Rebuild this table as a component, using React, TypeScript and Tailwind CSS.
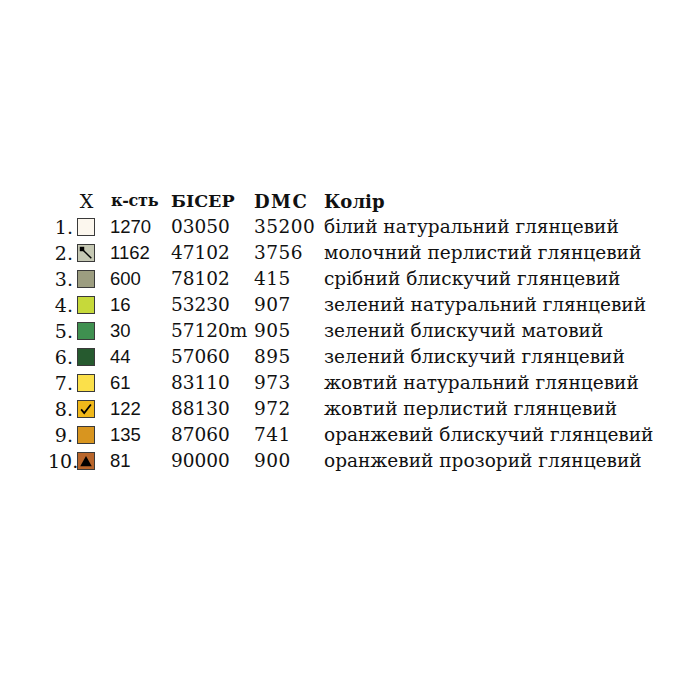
import React from 'react';

type Row = {
  n: number;
  color: string;
  mark?: 'pin' | 'check' | 'tri';
  qty: string;
  bead: string;
  dmc: string;
  name: string;
};

const rows: Row[] = [
  { n: 1, color: '#fcf7ee', qty: '1270', bead: '03050', dmc: '35200', name: 'білий натуральний глянцевий' },
  { n: 2, color: '#c5c8b3', mark: 'pin', qty: '1162', bead: '47102', dmc: '3756', name: 'молочний перлистий глянцевий' },
  { n: 3, color: '#9c9d80', qty: '600', bead: '78102', dmc: '415', name: 'срібний блискучий глянцевий' },
  { n: 4, color: '#c6d93a', qty: '16', bead: '53230', dmc: '907', name: 'зелений натуральний глянцевий' },
  { n: 5, color: '#3f9050', qty: '30', bead: '57120m', dmc: '905', name: 'зелений блискучий матовий' },
  { n: 6, color: '#265a2f', qty: '44', bead: '57060', dmc: '895', name: 'зелений блискучий глянцевий' },
  { n: 7, color: '#fbe04a', qty: '61', bead: '83110', dmc: '973', name: 'жовтий натуральний глянцевий' },
  { n: 8, color: '#f0b81a', mark: 'check', qty: '122', bead: '88130', dmc: '972', name: 'жовтий перлистий глянцевий' },
  { n: 9, color: '#d8951f', qty: '135', bead: '87060', dmc: '741', name: 'оранжевий блискучий глянцевий' },
  { n: 10, color: '#b8652b', mark: 'tri', qty: '81', bead: '90000', dmc: '900', name: 'оранжевий прозорий глянцевий' },
];

function Mark({ kind }: { kind?: Row['mark'] }) {
  if (!kind) return null;
  return (
    <svg viewBox="0 0 18 18" className="w-full h-full">
      {kind === 'pin' && (
        <>
          <rect x="2" y="2" width="5" height="5" fill="#000" />
          <line x1="5" y1="5" x2="15" y2="15" stroke="#000" strokeWidth="1.6" />
        </>
      )}
      {kind === 'check' && (
        <path d="M3.5 9.5 L7 13.5 L14.5 4" fill="none" stroke="#000" strokeWidth="2" />
      )}
      {kind === 'tri' && <path d="M9 3.5 L15.5 15 L2.5 15 Z" fill="#000" />}
    </svg>
  );
}

const serif = "font-['DejaVu_Serif','Liberation_Serif',serif]";
const sans = "font-['Liberation_Sans',Arial,sans-serif]";

export default function App() {
  return (
    <div className="w-[700px] h-[700px] bg-white text-[#111]">
      <div className="pt-[188px] pl-[48px]">
        <div className="grid grid-cols-[25px_23px_75px_83px_70px_auto] auto-rows-[26px] items-center whitespace-nowrap">
          {/* header */}
          <div />
          <div className={`${serif} text-[19px] text-center pl-[4px]`}>X</div>
          <div className={`${serif} text-[16px] font-bold pl-[15px] tracking-[-0.3px]`}>к-сть</div>
          <div className={`${serif} text-[17.5px] font-bold`}>БІСЕР</div>
          <div className={`${serif} text-[18px] font-bold tracking-[1.5px]`}>DMC</div>
          <div className={`${serif} text-[18px] font-bold`}>Колір</div>

          {rows.map((r) => (
            <React.Fragment key={r.n}>
              <div className={`${serif} text-[19px] text-right`}>{r.n}.</div>
              <div className="pl-[4px] flex items-center">
                <div
                  className="w-[18px] h-[18px] border border-[#3a3a3a]"
                  style={{ backgroundColor: r.color }}
                >
                  <Mark kind={r.mark} />
                </div>
              </div>
              <div className={`${sans} text-[18.5px] pl-[14px]`}>{r.qty}</div>
              <div className={`${serif} text-[18.5px]`}>{r.bead}</div>
              <div className={`${serif} text-[18.5px] tracking-[0.5px]`}>{r.dmc}</div>
              <div className={`${serif} text-[18.5px]`}>{r.name}</div>
            </React.Fragment>
          ))}
        </div>
      </div>
    </div>
  );
}
